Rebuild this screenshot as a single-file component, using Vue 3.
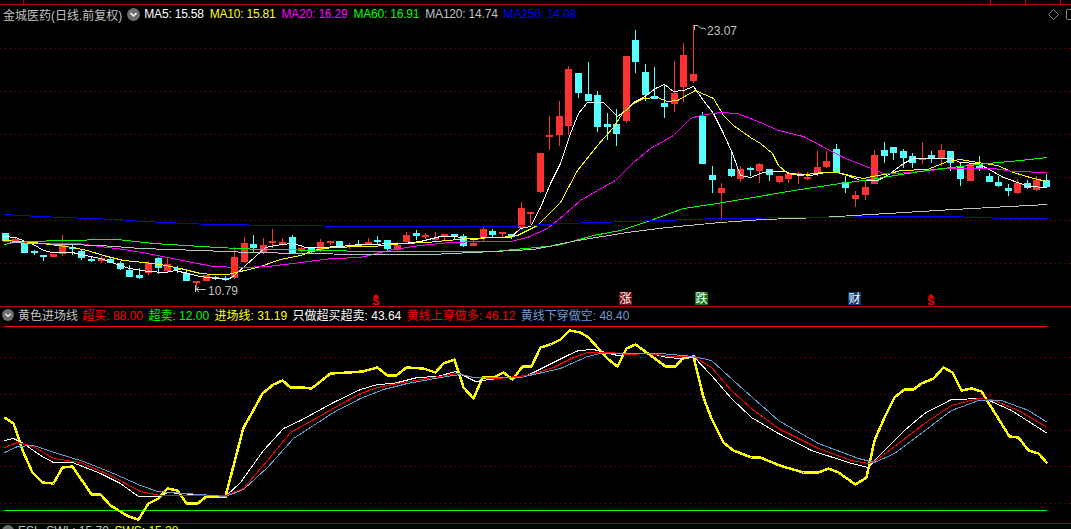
<script setup>
// 日线数据: [类型, 实体上沿, 实体下沿, 上影, 下影] 都是像素坐标, r=阳线 c=阴线
const bars = [
  ['c',233,241,233,241],['r',239,241,237,243],['c',243,253,243,253],['c',251,253,250,255],['c',255,257,255,261],
  ['r',254,257,254,257],['r',245,254,235,256],['c',247,249,243,255],['c',251,258,250,260],['c',259,261,257,262],
  ['r',258,261,256,263],['c',259,263,258,263],['c',263,269,261,270],['c',270,277,265,277],['c',275,278,268,279],
  ['r',263,273,261,275],['c',258,268,257,274],['r',264,271,257,272],['c',268,270,266,273],['c',273,281,271,281],
  ['r',281,283,281,290],['r',275,281,275,281],['c',277,279,276,280],['c',278,280,276,281],['r',257,278,247,279],
  ['r',243,262,237,263],['c',244,248,235,253],['r',245,252,238,254],['r',241,243,229,248],['r',242,244,238,246],
  ['c',237,253,235,254],['r',248,251,246,252],['c',248,252,248,253],['r',242,250,239,252],['r',241,243,241,245],
  ['c',241,246,241,246],['r',245,247,243,249],['c',244,246,240,247],['r',242,245,238,245],['c',240,242,236,244],
  ['c',240,249,240,252],['r',245,250,242,251],['r',235,242,232,243],['c',233,236,230,240],['r',235,237,233,239],
  ['r',238,240,232,241],['r',234,237,234,241],['c',234,236,234,239],['c',236,246,234,247],['r',243,246,240,246],
  ['r',229,238,226,241],['c',231,235,229,237],['r',232,234,232,237],['c',234,237,234,239],['r',208,228,202,230],
  ['r',212,214,212,224],['r',153,192,153,193],['r',135,137,116,150],['r',116,135,101,146],['r',69,126,66,135],
  ['c',73,93,73,98],['c',94,101,62,101],['c',95,127,91,132],['c',124,127,113,140],['c',124,134,109,146],
  ['r',56,121,56,123],['c',40,62,30,73],['c',72,95,64,101],['c',96,99,67,99],['c',103,107,84,118],
  ['r',93,104,61,112],['r',55,87,43,102],['r',74,81,25,83],['c',116,164,112,164],['c',175,180,166,193],
  ['r',188,193,183,220],['c',169,176,150,177],['r',169,179,166,182],['c',168,170,167,176],['r',164,171,163,183],
  ['c',169,175,169,181],['r',176,182,176,183],['r',174,179,172,183],['r',173,175,172,184],['r',177,179,172,180],
  ['r',167,174,151,176],['r',161,167,151,168],['c',149,173,144,173],['c',182,188,176,193],['r',195,199,191,207],
  ['r',187,195,180,200],['r',155,184,150,184],['c',150,156,142,163],['c',147,153,147,160],['c',151,158,149,168],
  ['c',156,163,153,168],['r',158,160,142,164],['c',155,159,151,163],['r',150,159,144,166],['c',151,163,151,171],
  ['c',167,179,163,186],['r',164,181,163,181],['c',166,169,156,171],['c',176,182,173,182],['c',182,186,176,187],
  ['c',188,191,184,196],['r',183,193,179,194],['c',183,188,180,189],['r',180,190,176,191],['c',180,187,174,188]
].map((b, i) => ({
  up: b[0] === 'r',
  x: Math.round(5 + 9.55 * i),
  top: b[1],
  h: b[2] - b[1],
  wickTop: b[3],
  wickH: b[4] - b[3]
}))

const mainGrid = [48, 91, 134, 177, 220, 263]
const subGrid = [357, 394, 430, 466, 503]

const maLines = [
  { color: '#ffffff', pts: '3,236 15,237 25,241 33,244 43,250 52,252 72,252 80,254 100,258 120,265 129,268 148,271 165,272 175,270 187,273 200,276 215,278 228,279 235,274 245,265 255,256 265,247 275,245 290,243 300,245 305,247 320,247 340,246 360,244 403,243 420,241 440,236 456,236 463,238 475,239 483,237 510,237 520,228 530,226 540,207 550,183 560,163 570,133 578,113 587,102 603,102 617,116 625,110 633,102 643,97 655,88 664,84 673,91 683,90 693,86 703,100 713,113 723,133 732,153 740,175 750,177 760,173 767,171 785,171 790,173 810,175 825,172 837,172 847,175 860,180 877,180 887,175 903,163 913,158 950,158 960,162 977,163 987,168 1003,177 1020,183 1027,186 1047,187' },
  { color: '#ffff00', pts: '3,240 20,241 33,242 50,244 72,247 87,250 103,255 123,260 143,262 160,264 180,268 200,273 213,274 227,274 240,271 257,267 280,259 300,255 317,249 333,247 360,246 373,246 403,243 427,242 447,240 470,238 500,237 517,235 537,225 560,202 577,170 597,145 613,127 622,113 633,103 643,98 657,97 667,101 677,100 695,90 713,98 723,115 733,125 750,137 760,143 772,153 778,165 787,173 800,175 813,173 823,172 837,172 853,176 863,178 877,175 890,173 900,170 927,169 947,161 960,159 977,162 997,165 1013,172 1033,178 1047,181' },
  { color: '#ff00ff', pts: '3,241 33,243 77,243 100,246 123,249 147,253 167,257 187,261 213,266 240,267 267,266 293,263 323,259 333,258 360,257 380,252 393,249 420,245 450,242 480,241 510,241 527,237 547,228 563,215 580,200 597,190 615,180 633,162 650,148 673,135 690,118 700,115 720,112 737,113 760,122 778,130 803,136 820,145 843,157 863,165 883,173 897,173 920,171 947,168 993,168 1013,171 1047,172' },
  { color: '#00ff00', pts: '4,244 13,242 57,240 117,239 153,243 217,247 260,249 333,250 360,251 493,251 557,245 593,235 620,230 650,220 683,208 717,203 747,198 787,191 813,187 840,183 877,178 907,173 933,169 960,166 987,163 1020,160 1047,157' },
  { color: '#c0c0c0', pts: '10,242 33,243 100,245 140,248 200,250 250,252 360,254 430,254 493,251 533,249 577,240 627,232 667,227 720,222 763,219 820,217 887,213 953,209 1047,204' },
  { color: '#0000ff', pts: '4,214 38,216 115,219 143,221 210,224 360,226 510,226 563,223 630,221 720,218 900,216 947,216 1007,218 1047,218' }
]

const jcLine = '4,417 13,423 23,452 32,472 42,482 53,483 62,467 72,466 91,494 100,494 110,505 128,516 138,519 148,503 158,498 167,488 177,490 186,503 197,503 206,496 225,496 243,427 250,415 262,393 273,384 282,380 290,387 302,387 311,388 330,373 348,372 362,371 377,367 387,375 396,375 406,367 423,368 435,372 443,363 454,359 463,387 473,398 482,377 493,377 503,372 512,379 522,366 531,366 540,347 550,344 560,339 569,330 580,332 588,337 607,358 617,366 626,348 635,344 653,357 665,366 675,366 682,358 693,356 703,397 711,418 723,442 733,450 751,457 760,457 779,465 803,472 818,472 828,468 838,472 855,484 866,477 874,440 884,417 894,397 904,389 913,389 921,383 933,378 943,367 952,372 961,390 971,388 981,391 1009,436 1018,437 1028,450 1038,453 1047,463'

const subLines = [
  { color: '#ffffff', pts: '4,440 13,438 23,443 40,455 53,462 72,462 100,473 120,483 138,496 160,496 167,492 193,494 225,496 240,482 263,450 283,428 300,420 333,402 360,389 377,384 393,383 417,377 437,376 455,371 463,375 475,381 497,378 527,375 547,365 567,355 578,350 593,349 617,355 637,353 650,353 667,357 680,358 693,356 711,375 731,398 751,417 778,433 811,450 851,463 868,467 874,460 891,443 904,430 924,413 951,399 984,398 1011,410 1047,433' },
  { color: '#ff0000', pts: '4,447 17,442 33,446 53,458 80,462 110,475 140,491 160,495 193,495 225,495 243,488 267,460 290,432 317,417 347,400 360,393 377,387 403,382 433,377 457,373 473,377 497,378 527,375 553,367 573,357 587,352 610,352 627,354 647,353 670,356 693,356 711,367 731,390 751,408 778,428 818,448 851,460 868,463 874,461 898,443 924,423 951,405 978,398 991,399 1018,410 1047,427' },
  { color: '#6a9ad0', pts: '4,452 17,446 33,445 57,453 83,461 113,473 140,485 157,491 200,494 225,496 243,489 267,467 293,438 333,412 360,398 383,389 407,383 440,377 460,374 473,377 520,377 560,368 587,356 600,353 627,353 660,353 693,356 711,360 744,390 778,420 818,443 858,458 874,462 894,453 918,435 951,410 978,400 1001,400 1028,410 1047,422' }
]

const maLegend = [
  { text: 'MA5: 15.58', color: '#ffffff' },
  { text: 'MA10: 15.81', color: '#ffff00' },
  { text: 'MA20: 16.29', color: '#ff00ff' },
  { text: 'MA60: 16.91', color: '#00ff00' },
  { text: 'MA120: 14.74', color: '#c0c0c0' },
  { text: 'MA250: 14.08', color: '#0000ff' }
]

const subLegend = [
  { text: '超买: 88.00', color: '#ff0000' },
  { text: '超卖: 12.00', color: '#00ff00' },
  { text: '进场线: 31.19', color: '#ffff00' },
  { text: '只做超买超卖: 43.64', color: '#ffffff' },
  { text: '黄线上穿做多: 46.12', color: '#ff0000' },
  { text: '黄线下穿做空: 48.40', color: '#6a9ad0' }
]

const signs = [
  { x: 619, text: '涨', bg: '#7a0f0f', color: '#ffffff' },
  { x: 695, text: '跌', bg: '#0a7a14', color: '#ffffff' },
  { x: 848, text: '财', bg: '#0c3a6e', color: '#ffffff' }
]
const dollars = [376, 931]
const tabTicks = [23, 990, 1025, 1060]
</script>

<template>
  <div class="screen">
    <svg class="tabs" width="1071" height="5" viewBox="0 0 1071 5" shape-rendering="crispEdges">
      <rect v-for="t in tabTicks" :key="t" :x="t" y="0" width="1" height="4" fill="#c00000" />
      <rect x="0" y="4" width="1071" height="1" fill="#c00000" />
    </svg>

    <section class="pane pane-main">
      <div class="legend">
        <span class="title">金城医药(日线.前复权)</span>
        <svg class="fold" width="13" height="13" viewBox="0 0 13 13">
          <circle cx="6.5" cy="6.5" r="6.5" fill="#6e6e6e" />
          <path d="M3.5 5 L6.5 8 L9.5 5" fill="none" stroke="#fff" stroke-width="1.5" />
        </svg>
        <span v-for="m in maLegend" :key="m.text" class="ma" :style="{ color: m.color }">{{ m.text }}</span>
      </div>
      <div class="corner">
        <svg width="23" height="11" viewBox="0 0 23 11" fill="none" stroke="#8a8a8a">
          <path d="M5.5 .5 L10.5 5.5 L5.5 10.5 L.5 5.5 Z" />
          <rect x="18.5" y="0.5" width="6" height="10" rx="1" />
        </svg>
      </div>

      <svg class="chart" width="1071" height="301" viewBox="0 5 1071 301">
        <g shape-rendering="crispEdges">
          <line v-for="y in mainGrid" :key="y" x1="0" x2="1071" :y1="y + 0.5" :y2="y + 0.5" class="dots" />
          <g v-for="(b, i) in bars" :key="i" :fill="b.up ? '#ff3232' : '#54ffff'">
            <rect :x="b.x" :y="b.wickTop" width="1" :height="b.wickH" />
            <rect :x="b.x - 3" :y="b.top" width="7" :height="b.h" />
          </g>
          <g transform="translate(.5 .5)">
            <polyline v-for="l in maLines" :key="l.color" :points="l.pts" :stroke="l.color" fill="none" stroke-width="1" />
          </g>
        </g>

        <g fill="none" stroke="#c0c0c0">
          <path d="M694.5 25 V30 M694.5 25.5 H698 L701 28.5 L704 28 L706 30" />
          <path d="M195.5 285 V292 M196 289.5 H206 M196 289.5 L199 287 M196 289.5 L199 292" />
        </g>
        <text x="707" y="35" class="mark">23.07</text>
        <text x="208" y="295" class="mark">10.79</text>

        <g v-for="s in signs" :key="s.x">
          <rect :x="s.x" y="292" width="13" height="13" :fill="s.bg" />
          <text :x="s.x + 0.5" y="303" class="sign" :fill="s.color">{{ s.text }}</text>
        </g>
        <g v-for="d in dollars" :key="d">
          <path :d="`M${d} 294 L${d + 3} 297 H${d - 3} Z`" fill="#ff0000" />
          <text :x="d" y="305" class="dollar">S</text>
        </g>
      </svg>
    </section>

    <section class="pane pane-sub">
      <div class="legend legend-sub">
        <svg class="fold" width="12" height="12" viewBox="0 0 13 13">
          <circle cx="6.5" cy="6.5" r="6.5" fill="#6e6e6e" />
          <path d="M3.5 5 L6.5 8 L9.5 5" fill="none" stroke="#fff" stroke-width="1.5" />
        </svg>
        <span class="title head">黄色进场线</span>
        <span v-for="m in subLegend" :key="m.text" :style="{ color: m.color }">{{ m.text }}</span>
      </div>

      <svg class="chart" width="1071" height="216" viewBox="0 307 1071 216">
        <g shape-rendering="crispEdges">
          <line v-for="y in subGrid" :key="y" x1="0" x2="1071" :y1="y + 0.5" :y2="y + 0.5" class="dots" />
          <rect x="4" y="326" width="1043" height="1" fill="#ff0000" />
          <rect x="4" y="510" width="1043" height="1" fill="#00ff00" />
          <g transform="translate(.5 .5)">
            <polyline :points="jcLine" stroke="#ffff00" fill="none" stroke-width="2.5" />
            <polyline v-for="l in subLines" :key="l.color" :points="l.pts" :stroke="l.color" fill="none" stroke-width="1" />
          </g>
        </g>
      </svg>
    </section>

    <section class="pane pane-next">
      <div class="legend legend-next">
        <svg class="fold" width="12" height="12" viewBox="0 0 13 13">
          <circle cx="6.5" cy="6.5" r="6.5" fill="#6e6e6e" />
        </svg>
        <span class="title">ESL</span>
        <span class="title">SWL: 15.70</span>
        <span class="sws">SWS: 15.28</span>
      </div>
    </section>
  </div>
</template>

<style scoped>
.screen {
  width: 1071px;
  height: 529px;
  display: flex;
  flex-direction: column;
  overflow: hidden;
  background: #000;
  font: 12px "Liberation Sans", "Noto Sans CJK SC", sans-serif;
}

.tabs {
  display: block;
  flex: none;
}

.pane {
  position: relative;
  flex: none;
  overflow: hidden;
}

.pane-main {
  height: 301px;
  border-bottom: 1px solid #c00000;
}

.pane-sub {
  height: 216px;
  border-bottom: 1px solid #a00000;
}

.pane-next {
  height: 5px;
}

.chart {
  display: block;
}

.legend {
  position: absolute;
  top: 0;
  left: 3px;
  height: 18px;
  display: flex;
  align-items: center;
  gap: 6px;
  white-space: nowrap;
  z-index: 1;
}

.ma {
  letter-spacing: -0.2px;
}

.legend-sub {
  left: 2px;
  height: 15px;
  gap: 5.4px;
}

.legend-next {
  top: 1px;
  left: 2px;
  height: 12px;
  gap: 5.5px;
}

.fold {
  flex: none;
  margin: 0 -2px 0 -1px;
}

.legend-sub .fold,
.legend-next .fold {
  margin: 0 -1.5px 0 0;
}

.legend-sub .head {
  margin-right: -1px;
}

.title {
  color: #c0c0c0;
}

.sws {
  color: #ffff00;
}

.corner {
  position: absolute;
  top: 4px;
  right: 0;
  width: 23px;
  height: 11px;
  overflow: hidden;
  z-index: 1;
}

.corner svg {
  display: block;
  overflow: visible;
}

.dots {
  stroke: #a00000;
  stroke-width: 1;
  stroke-dasharray: 1 4;
}

.mark {
  font-size: 12px;
  fill: #c0c0c0;
}

.sign {
  font: 12px "Noto Sans CJK SC", sans-serif;
}

.dollar {
  font: bold 11px "Liberation Sans", sans-serif;
  fill: #ff0000;
  text-anchor: middle;
}
</style>
